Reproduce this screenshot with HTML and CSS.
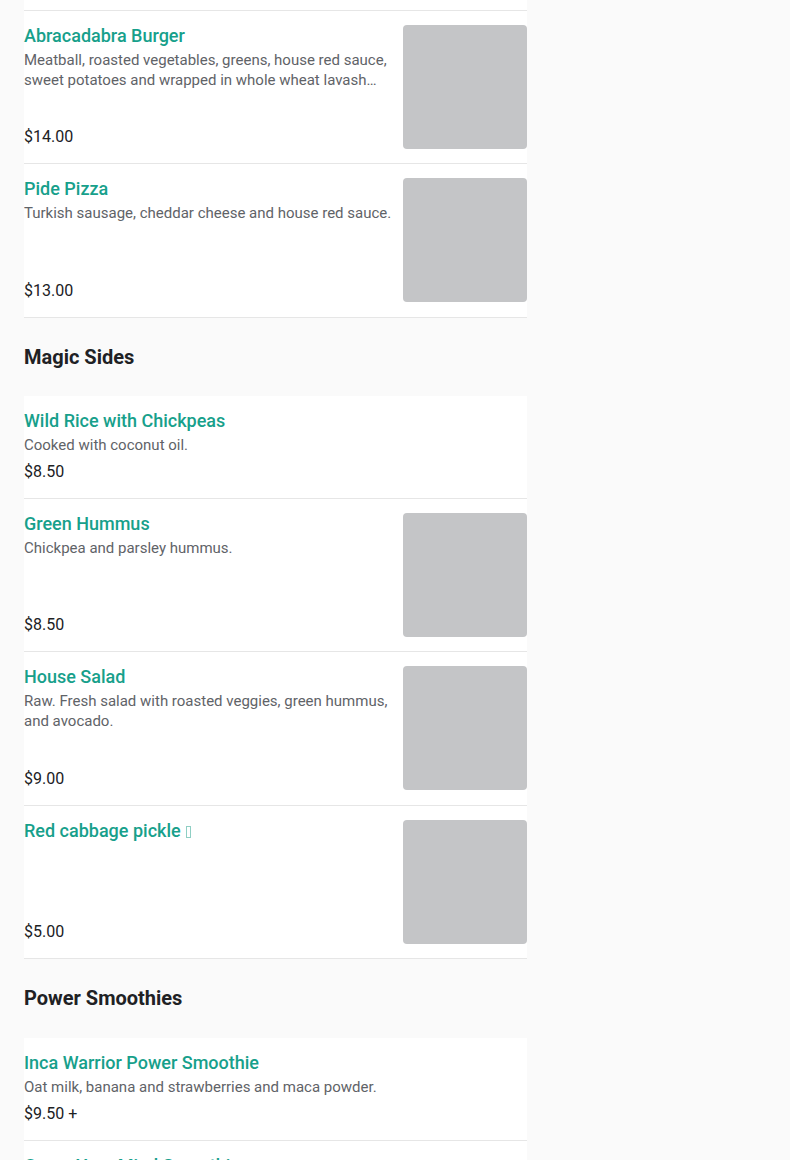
FILE: index.html
```html
<!DOCTYPE html>
<html>
<head>
<meta charset="utf-8">
<link rel="stylesheet" href="styles.css">
</head>
<body>
<main class="menu">
  <div class="list">
    <div class="item item-cut"></div>
    <div class="item">
      <div class="info">
        <div class="name">Abracadabra Burger</div>
        <div class="desc">Meatball, roasted vegetables, greens, house red sauce, sweet potatoes and wrapped in whole wheat lavash bread with a side of house dressing.</div>
        <div class="price">$14.00</div>
      </div>
      <div class="photo"></div>
    </div>
    <div class="item">
      <div class="info">
        <div class="name">Pide Pizza</div>
        <div class="desc">Turkish sausage, cheddar cheese and house red sauce.</div>
        <div class="price">$13.00</div>
      </div>
      <div class="photo"></div>
    </div>
  </div>

  <h2 class="section-title">Magic Sides</h2>
  <div class="list">
    <div class="item">
      <div class="info">
        <div class="name">Wild Rice with Chickpeas</div>
        <div class="desc">Cooked with coconut oil.</div>
        <div class="price">$8.50</div>
      </div>
    </div>
    <div class="item">
      <div class="info">
        <div class="name">Green Hummus</div>
        <div class="desc">Chickpea and parsley hummus.</div>
        <div class="price">$8.50</div>
      </div>
      <div class="photo"></div>
    </div>
    <div class="item">
      <div class="info">
        <div class="name">House Salad</div>
        <div class="desc">Raw. Fresh salad with roasted veggies, green hummus, and avocado.</div>
        <div class="price">$9.00</div>
      </div>
      <div class="photo"></div>
    </div>
    <div class="item">
      <div class="info">
        <div class="name">Red cabbage pickle <span class="tofu"></span></div>
        <div class="price">$5.00</div>
      </div>
      <div class="photo"></div>
    </div>
  </div>

  <h2 class="section-title">Power Smoothies</h2>
  <div class="list">
    <div class="item">
      <div class="info">
        <div class="name">Inca Warrior Power Smoothie</div>
        <div class="desc">Oat milk, banana and strawberries and maca powder.</div>
        <div class="price">$9.50 +</div>
      </div>
    </div>
    <div class="item">
      <div class="info">
        <div class="name">Green Your Mind Smoothie</div>
        <div class="desc">Spinach, kale, banana and almond milk.</div>
        <div class="price">$9.50 +</div>
      </div>
    </div>
  </div>
</main>
</body>
</html>
```

FILE: styles.css
```css
* {
  box-sizing: border-box;
}

html, body {
  margin: 0;
  padding: 0;
  background: #fafafa;
  font-family: Roboto, "Liberation Sans", Arial, sans-serif;
}

.menu {
  width: 503px;
  margin-left: 24px;
}

.list {
  background: #ffffff;
}

.item {
  display: flex;
  gap: 8px;
  padding: 14px 0;
  border-bottom: 1px solid #e6e6e6;
}

.item-cut {
  height: 11px;
  padding: 0;
}

.info {
  flex: 1;
  min-width: 0;
  display: flex;
  flex-direction: column;
}

.name {
  font-size: 18px;
  font-weight: 500;
  line-height: 22px;
  color: #17a08b;
}

.tofu {
  display: inline-block;
  width: 5px;
  height: 12px;
  border: 1px solid #8fcfc4;
  vertical-align: -1px;
  margin-left: 1px;
}

.desc {
  margin-top: 3px;
  font-size: 15px;
  line-height: 20px;
  color: #5f6368;
  display: -webkit-box;
  -webkit-line-clamp: 2;
  -webkit-box-orient: vertical;
  overflow: hidden;
}

.price {
  margin-top: auto;
  padding-top: 5px;
  font-size: 16px;
  line-height: 24px;
  color: #202124;
}

.photo {
  flex: none;
  width: 124px;
  height: 124px;
  margin-bottom: 0.33px;
  border-radius: 4px;
  background: #c4c5c7;
}

.section-title {
  margin: 0;
  padding: 27px 0 27.5px;
  font-size: 20px;
  font-weight: 700;
  line-height: 24px;
  color: #202124;
}
```
